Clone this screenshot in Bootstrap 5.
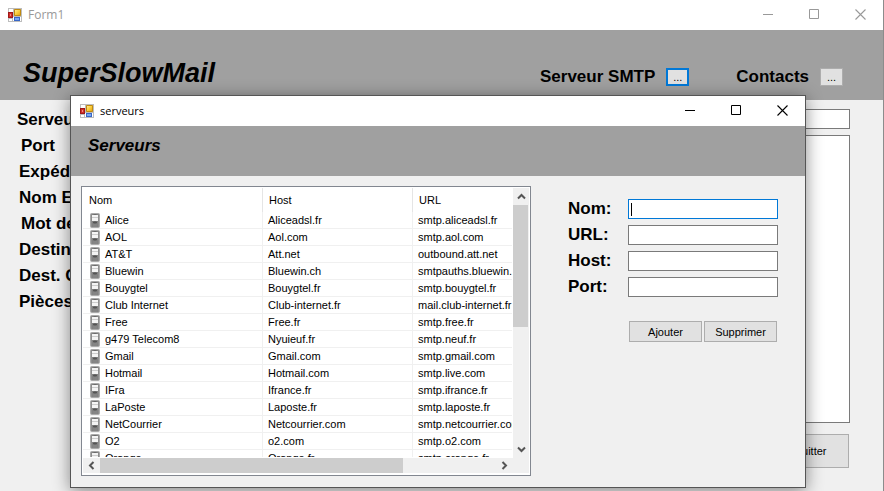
<!DOCTYPE html>
<html lang="fr">
<head>
<meta charset="utf-8">
<meta name="viewport" content="width=device-width, initial-scale=1">
<title>SuperSlowMail</title>
<link href="https://cdn.jsdelivr.net/npm/bootstrap@5.3.0/dist/css/bootstrap.min.css" rel="stylesheet">
<style>
  body { font: 11px/16px "Liberation Sans", Arial, sans-serif; color: #000; background: #f0f0f0; }
  .main-window { border-right: 1px solid #8c8c8c; }
  .title-bar { height: 30px; background: #fff; font: 12px/16px "Open Sans", "Noto Sans", sans-serif; padding-left: 8px; gap: 6px; }
  .title-bar.inactive { color: #999; }
  .dialog-window .title-bar { font-size: 11px; padding-left: 9px; }
  .win-btn { width: 46px; height: 30px; border: 0; background: none; color: inherit; padding: 0 0 1px; }
  .win-btn svg, .title-bar svg { display: block; }
  .win-btn svg { margin: 0 auto; }
  .banner { background: #a0a0a0; }
  .main-banner { height: 70px; padding: 25px 40px 0 23px; }
  .app-name { font: italic bold 27px/36px "Liberation Sans", Arial, sans-serif; }
  .banner-tools { margin-top: 9px; gap: 11px; }
  .field-label { font: bold 17px/26px "Liberation Sans", Arial, sans-serif; white-space: nowrap; }
  .win-control { background: #e1e1e1; border: 1px solid #adadad; color: #000; padding: 0; line-height: 16px; }
  .more-btn { width: 23px; height: 18px; line-height: 14px; }
  .more-btn.chosen { border: 2px solid #0078d7; margin-right: 36px; }
  .text-field { border: 1px solid #7a7a7a; border-radius: 0; background: #fff; height: 20px; padding: 0 3px; }
  .main-body { min-height: 391px; padding: 5px 33px 23px 17px; }
  .label-column { width: 150px; padding-top: 2px; }
  .indent-a { padding-left: 4px; }
  .indent-b { padding-left: 2px; }
  .message-field { height: 288px; resize: none; margin-top: 6px; }
  .quit-btn { width: 78px; height: 34px; margin: 11px 1px 0 0; }
  .dialog-window { position: absolute; top: 95px; left: 70px; right: 78px; border: 1px solid #555; background: #f0f0f0; box-shadow: 0 3px 16px rgba(0,0,0,.45); }
  .dialog-banner { height: 50px; padding: 7px 17px; font: italic bold 17px/26px "Liberation Sans", Arial, sans-serif; }
  .dialog-body { padding: 10px 27px 11px 10px; gap: 37px; }
  .server-list { flex: 0 1 450px; min-width: 0; border: 1px solid #828790; background: #fff; padding: 1px 1px 2px 1px; display: grid; grid-template-columns: 1fr 16px; grid-template-rows: 270px 15px; }
  .list-view { overflow: hidden; min-width: 0; border-right: 1px solid #fff; border-bottom: 1px solid #fff; }
  .server-table { table-layout: fixed; width: 530px; border-collapse: separate; border-spacing: 0; }
  .server-table th { height: 24px; padding: 0 6px; font-weight: 400; border-right: 1px solid #e5e5e5; }
  .server-table td { height: 17px; line-height: 15px; padding: 1px 5px 0; border-right: 1px solid #f0f0f0; border-bottom: 1px solid #f0f0f0; white-space: nowrap; overflow: hidden; }
  .server-table td:first-child { padding-left: 7px; }
  .server-table svg { display: block; margin-right: 5px; }
  .scroll-part { background: #f0f0f0; color: #555; }
  .scroll-arrow { width: 17px; height: 17px; border: 0; background: none; padding: 0; color: inherit; flex: none; }
  .scroll-arrow svg { display: block; margin: auto; }
  .thumb { background: #cdcdcd; }
  .v-thumb { height: 122px; width: 15px; }
  .h-thumb { width: 303px; }
  .edit-form { padding-top: 9px; }
  .edit-row { display: grid; grid-template-columns: 60px 1fr; align-items: center; height: 26px; }
  .edit-row .field-label { padding-top: 1px; }
  .active-field { border-color: #0078d7; background: linear-gradient(#000, #000) 2px 3px / 1px 13px no-repeat #fff; }
  .action-row { margin-top: 22px; padding: 0 1px 0 61px; gap: 2px; }
  .action-btn { height: 21px; flex: 1 1 0; }
</style>
<script src="https://cdn.jsdelivr.net/npm/bootstrap@5.3.0/dist/js/bootstrap.bundle.min.js"></script>
</head>
<body>
<svg class="position-absolute" width="0" height="0" aria-hidden="true">
  <defs>
    <linearGradient id="gold" x2="1" y2="1"><stop stop-color="#fff0a0"/><stop offset=".5" stop-color="#fbcf3c"/><stop offset="1" stop-color="#dd9d10"/></linearGradient>
    <linearGradient id="steel" x2="1"><stop stop-color="#999"/><stop offset=".5" stop-color="#666"/><stop offset="1" stop-color="#999"/></linearGradient>
  </defs>
  <symbol id="form-icon" viewBox="0 0 14 14">
    <path d="M0 0h14v14H0z" fill="#bdbdbd"/><path d="M1 1h4v3H1zM1 11h3v2H1zM5 9h1v4H5zM12 9h1v4h-1z" fill="#fff"/>
    <path d="M0 4h5v6H0z" fill="#a01818"/><path d="M1 5h3v4H1z" fill="#cf3028"/><path d="M2 6h1v2H2z" fill="#f08a80"/>
    <path d="M6.500 1.500h6v6h-6z" fill="url(#gold)" stroke="#c08a10"/>
    <path d="M6 9h6v4H6z" fill="#3867c8"/><path d="M7 10h4v2H7z" fill="#7aa8f0"/>
  </symbol>
  <symbol id="server-icon" viewBox="0 0 10 15">
    <rect x=".5" y=".5" width="9" height="14" rx="1" fill="url(#steel)" stroke="#aaa"/>
    <path d="M2 2h6v6H2z" fill="#f4f4f4"/><path d="M2 4h6v1H2z" fill="#ccc"/><path d="M3 9h4v1H3z" fill="#555"/><path d="M3 11h4v3H3z" fill="#858585"/>
  </symbol>
  <symbol id="min-icon" viewBox="0 0 11 11"><path d="M0 5.500h10" stroke="currentColor"/></symbol>
  <symbol id="max-icon" viewBox="0 0 11 11"><path d="M.5.5h9v9h-9z" fill="none" stroke="currentColor"/></symbol>
  <symbol id="close-icon" viewBox="0 0 11 11"><path d="M.5.5l10 10M10.500.5l-10 10" fill="none" stroke="currentColor" stroke-width="1.100"/></symbol>
  <symbol id="arrow-icon" viewBox="0 0 9 9"><path d="M1 6.500l3.500-3.500L8 6.500" fill="none" stroke="currentColor" stroke-width="2"/></symbol>
</svg>

<main class="main-window">
  <div class="title-bar inactive d-flex align-items-center">
    <svg width="14" height="14"><use href="#form-icon"/></svg>
    <span class="me-auto">Form1</span>
    <div class="d-flex">
      <button class="win-btn" aria-label="Réduire"><svg width="11" height="11"><use href="#min-icon"/></svg></button>
      <button class="win-btn" aria-label="Agrandir"><svg width="11" height="11"><use href="#max-icon"/></svg></button>
      <button class="win-btn" aria-label="Fermer"><svg width="11" height="11"><use href="#close-icon"/></svg></button>
    </div>
  </div>
  <header class="banner main-banner d-flex align-items-start">
    <h1 class="app-name m-0 me-auto">SuperSlowMail</h1>
    <div class="banner-tools d-flex align-items-center">
      <span class="field-label" id="smtp">Serveur SMTP</span>
      <button class="win-control more-btn chosen" aria-labelledby="smtp">...</button>
      <span class="field-label" id="contacts">Contacts</span>
      <button class="win-control more-btn" aria-labelledby="contacts">...</button>
    </div>
  </header>
  <div class="main-body d-flex">
    <div class="label-column d-flex flex-column">
      <label class="field-label" for="f1">Serveur</label>
      <label class="field-label indent-a" for="f1">Port</label>
      <label class="field-label indent-b" for="f1">Expéditeur</label>
      <label class="field-label indent-b" for="f1">Nom Expéditeur</label>
      <label class="field-label indent-a" for="f1">Mot de passe</label>
      <label class="field-label indent-b" for="f1">Destinataire</label>
      <label class="field-label indent-b" for="f1">Dest. Caché</label>
      <label class="field-label indent-b" for="f1">Pièces jointes</label>
    </div>
    <div class="flex-grow-1 d-flex flex-column pt-1">
      <input class="text-field w-100" id="f1" type="text">
      <textarea class="text-field message-field w-100" aria-label="Message"></textarea>
      <button class="win-control quit-btn align-self-end">Quitter</button>
    </div>
  </div>
</main>

<section class="dialog-window" role="dialog" aria-label="serveurs">
  <div class="title-bar d-flex align-items-center">
    <svg width="14" height="14"><use href="#form-icon"/></svg>
    <span class="me-auto">serveurs</span>
    <div class="d-flex">
      <button class="win-btn" aria-label="Réduire"><svg width="11" height="11"><use href="#min-icon"/></svg></button>
      <button class="win-btn" aria-label="Agrandir"><svg width="11" height="11"><use href="#max-icon"/></svg></button>
      <button class="win-btn" aria-label="Fermer"><svg width="11" height="11"><use href="#close-icon"/></svg></button>
    </div>
  </div>
  <h2 class="banner dialog-banner m-0">Serveurs</h2>
  <div class="dialog-body d-flex align-items-start">
    <div class="server-list">
      <div class="list-view">
        <table class="server-table">
          <colgroup><col style="width:180px"><col style="width:150px"><col style="width:200px"></colgroup>
          <thead><tr><th>Nom</th><th>Host</th><th>URL</th></tr></thead>
          <tbody id="rows"></tbody>
        </table>
      </div>
      <div class="scroll-part d-flex flex-column">
        <button class="scroll-arrow" aria-label="Haut"><svg width="9" height="9"><use href="#arrow-icon"/></svg></button>
        <div class="thumb v-thumb"></div>
        <button class="scroll-arrow mt-auto" aria-label="Bas"><svg width="9" height="9"><use href="#arrow-icon" transform="rotate(180 4.500 4.500)"/></svg></button>
      </div>
      <div class="scroll-part d-flex align-items-stretch">
        <button class="scroll-arrow h-100" aria-label="Gauche"><svg width="9" height="9"><use href="#arrow-icon" transform="rotate(-90 4.500 4.500)"/></svg></button>
        <div class="thumb h-thumb"></div>
        <button class="scroll-arrow h-100 ms-auto" aria-label="Droite"><svg width="9" height="9"><use href="#arrow-icon" transform="rotate(90 4.500 4.500)"/></svg></button>
      </div>
      <div class="scroll-part"></div>
    </div>
    <form class="edit-form flex-grow-1">
      <div class="edit-row"><label class="field-label" for="nom">Nom:</label><input class="text-field active-field w-100" id="nom" type="text"></div>
      <div class="edit-row"><label class="field-label" for="url">URL:</label><input class="text-field w-100" id="url" type="text"></div>
      <div class="edit-row"><label class="field-label" for="host">Host:</label><input class="text-field w-100" id="host" type="text"></div>
      <div class="edit-row"><label class="field-label" for="port">Port:</label><input class="text-field w-100" id="port" type="text"></div>
      <div class="action-row d-flex">
        <button class="win-control action-btn" type="button">Ajouter</button>
        <button class="win-control action-btn" type="button">Supprimer</button>
      </div>
    </form>
  </div>
</section>
<script>
  const servers = [
    ["Alice", "Aliceadsl.fr", "smtp.aliceadsl.fr"], ["AOL", "Aol.com", "smtp.aol.com"],
    ["AT&amp;T", "Att.net", "outbound.att.net"], ["Bluewin", "Bluewin.ch", "smtpauths.bluewin.ch"],
    ["Bouygtel", "Bouygtel.fr", "smtp.bouygtel.fr"], ["Club Internet", "Club-internet.fr", "mail.club-internet.fr"],
    ["Free", "Free.fr", "smtp.free.fr"], ["g479 Telecom8", "Nyuieuf.fr", "smtp.neuf.fr"],
    ["Gmail", "Gmail.com", "smtp.gmail.com"], ["Hotmail", "Hotmail.com", "smtp.live.com"],
    ["IFra", "Ifrance.fr", "smtp.ifrance.fr"], ["LaPoste", "Laposte.fr", "smtp.laposte.fr"],
    ["NetCourrier", "Netcourrier.com", "smtp.netcourrier.com"], ["O2", "o2.com", "smtp.o2.com"],
    ["Orange", "Orange.fr", "smtp.orange.fr"]
  ];
  document.getElementById("rows").innerHTML = servers.map(([name, host, url]) =>
    `<tr><td><div class="d-flex align-items-center"><svg width="10" height="15"><use href="#server-icon"/></svg>${name}</div></td><td>${host}</td><td>${url}</td></tr>`
  ).join("");
</script>
</body>
</html>
